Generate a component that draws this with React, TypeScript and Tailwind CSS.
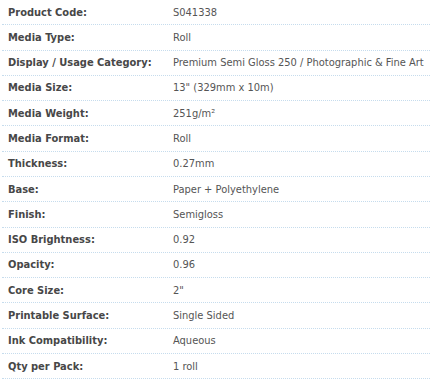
import React from "react";

const rows: [string, string][] = [
  ["Product Code:", "S041338"],
  ["Media Type:", "Roll"],
  ["Display / Usage Category:", "Premium Semi Gloss 250 / Photographic & Fine Art"],
  ["Media Size:", "13\" (329mm x 10m)"],
  ["Media Weight:", "251g/m²"],
  ["Media Format:", "Roll"],
  ["Thickness:", "0.27mm"],
  ["Base:", "Paper + Polyethylene"],
  ["Finish:", "Semigloss"],
  ["ISO Brightness:", "0.92"],
  ["Opacity:", "0.96"],
  ["Core Size:", "2\""],
  ["Printable Surface:", "Single Sided"],
  ["Ink Compatibility:", "Aqueous"],
  ["Qty per Pack:", "1 roll"],
];

export default function App() {
  return (
    <div
      className="w-[431px] h-[382px] bg-white overflow-hidden"
      style={{ fontFamily: '"DejaVu Sans Condensed", "DejaVu Sans", sans-serif', fontStretch: "condensed" }}
    >
      <div className="flex flex-col pl-[2px] pr-[1px]">
        {rows.map(([label, value]) => (
          <div
            key={label}
            className="flex items-center h-[25.29px] border-b border-dotted border-[#c6dced] text-[11px] leading-none"
          >
            <div className="w-[171px] pl-[6px] font-bold text-[#474747]">{label}</div>
            <div className="text-[#555555]">{value}</div>
          </div>
        ))}
      </div>
    </div>
  );
}
